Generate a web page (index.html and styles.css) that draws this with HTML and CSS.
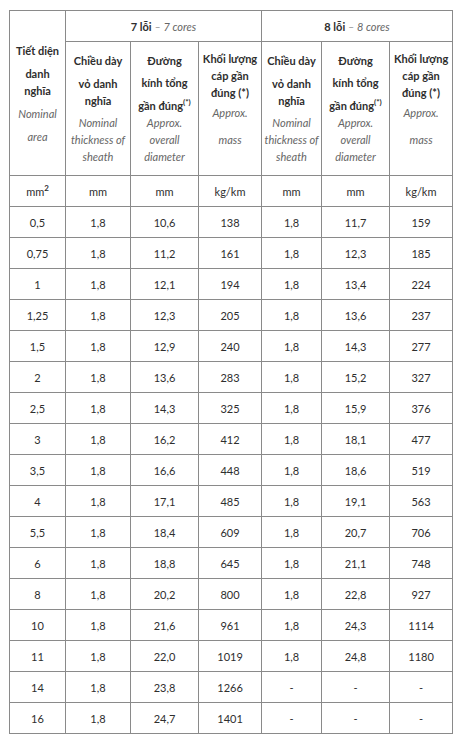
FILE: index.html
```html
<!DOCTYPE html>
<html lang="vi">
<head>
<meta charset="utf-8">
<link rel="stylesheet" href="styles.css">
</head>
<body>
<table class="spec">
  <colgroup>
    <col class="c1"><col class="c2"><col class="c3"><col class="c4"><col class="c5"><col class="c6"><col class="c7">
  </colgroup>
  <thead>
    <tr class="group">
      <th rowspan="2" class="h-area">
        <span class="ln">Tiết diện</span>
        <span class="ln gap">danh</span>
        <span class="ln">nghĩa</span>
        <span class="ln gap it">Nominal</span>
        <span class="ln gap it">area</span>
      </th>
      <th colspan="3" class="grp"><b>7 lỗi</b> <span class="it">– 7 cores</span></th>
      <th colspan="3" class="grp"><b>8 lỗi</b> <span class="it">– 8 cores</span></th>
    </tr>
    <tr class="sub">
      <th>
        <span class="ln">Chiều dày</span>
        <span class="ln gap">vỏ danh</span>
        <span class="ln">nghĩa</span>
        <span class="ln gap5 it">Nominal</span>
        <span class="ln it">thickness of</span>
        <span class="ln it">sheath</span>
      </th>
      <th>
        <span class="ln">Đường</span>
        <span class="ln gap5">kính tổng</span>
        <span class="ln gap">gần đúng<sup>(*)</sup></span>
        <span class="ln it">Approx.</span>
        <span class="ln it">overall</span>
        <span class="ln it">diameter</span>
      </th>
      <th class="h-mass">
        <span class="ln">Khối lượng</span>
        <span class="ln">cáp gần</span>
        <span class="ln">đúng (*)</span>
        <span class="ln gap3 it">Approx.</span>
        <span class="ln gap10 it">mass</span>
      </th>
      <th>
        <span class="ln">Chiều dày</span>
        <span class="ln gap">vỏ danh</span>
        <span class="ln">nghĩa</span>
        <span class="ln gap5 it">Nominal</span>
        <span class="ln it">thickness of</span>
        <span class="ln it">sheath</span>
      </th>
      <th>
        <span class="ln">Đường</span>
        <span class="ln gap5">kính tổng</span>
        <span class="ln gap">gần đúng<sup>(*)</sup></span>
        <span class="ln it">Approx.</span>
        <span class="ln it">overall</span>
        <span class="ln it">diameter</span>
      </th>
      <th class="h-mass">
        <span class="ln">Khối lượng</span>
        <span class="ln">cáp gần</span>
        <span class="ln">đúng (*)</span>
        <span class="ln gap3 it">Approx.</span>
        <span class="ln gap10 it">mass</span>
      </th>
    </tr>
  </thead>
  <tbody>
    <tr><td>mm<sup>2</sup></td><td>mm</td><td>mm</td><td>kg/km</td><td>mm</td><td>mm</td><td>kg/km</td></tr>
    <tr><td>0,5</td><td>1,8</td><td>10,6</td><td>138</td><td>1,8</td><td>11,7</td><td>159</td></tr>
    <tr><td>0,75</td><td>1,8</td><td>11,2</td><td>161</td><td>1,8</td><td>12,3</td><td>185</td></tr>
    <tr><td>1</td><td>1,8</td><td>12,1</td><td>194</td><td>1,8</td><td>13,4</td><td>224</td></tr>
    <tr><td>1,25</td><td>1,8</td><td>12,3</td><td>205</td><td>1,8</td><td>13,6</td><td>237</td></tr>
    <tr><td>1,5</td><td>1,8</td><td>12,9</td><td>240</td><td>1,8</td><td>14,3</td><td>277</td></tr>
    <tr><td>2</td><td>1,8</td><td>13,6</td><td>283</td><td>1,8</td><td>15,2</td><td>327</td></tr>
    <tr><td>2,5</td><td>1,8</td><td>14,3</td><td>325</td><td>1,8</td><td>15,9</td><td>376</td></tr>
    <tr><td>3</td><td>1,8</td><td>16,2</td><td>412</td><td>1,8</td><td>18,1</td><td>477</td></tr>
    <tr><td>3,5</td><td>1,8</td><td>16,6</td><td>448</td><td>1,8</td><td>18,6</td><td>519</td></tr>
    <tr><td>4</td><td>1,8</td><td>17,1</td><td>485</td><td>1,8</td><td>19,1</td><td>563</td></tr>
    <tr><td>5,5</td><td>1,8</td><td>18,4</td><td>609</td><td>1,8</td><td>20,7</td><td>706</td></tr>
    <tr><td>6</td><td>1,8</td><td>18,8</td><td>645</td><td>1,8</td><td>21,1</td><td>748</td></tr>
    <tr><td>8</td><td>1,8</td><td>20,2</td><td>800</td><td>1,8</td><td>22,8</td><td>927</td></tr>
    <tr><td>10</td><td>1,8</td><td>21,6</td><td>961</td><td>1,8</td><td>24,3</td><td>1114</td></tr>
    <tr><td>11</td><td>1,8</td><td>22,0</td><td>1019</td><td>1,8</td><td>24,8</td><td>1180</td></tr>
    <tr><td>14</td><td>1,8</td><td>23,8</td><td>1266</td><td>-</td><td>-</td><td>-</td></tr>
    <tr><td>16</td><td>1,8</td><td>24,7</td><td>1401</td><td>-</td><td>-</td><td>-</td></tr>
  </tbody>
</table>
</body>
</html>
```

FILE: styles.css
```css
html, body {
  margin: 0;
  padding: 0;
  background: #ffffff;
}

body {
  padding: 10px 0 0 9px;
  font-family: Lato, "Open Sans", "Liberation Sans", sans-serif;
  font-size: 11px;
  color: #2e2e2e;
}

.spec {
  border-collapse: collapse;
  table-layout: fixed;
  width: 443px;
}

.c1 { width: 56px; }
.c2 { width: 65px; }
.c3 { width: 68px; }
.c4 { width: 63px; }
.c5 { width: 60px; }
.c6 { width: 68px; }
.c7 { width: 63px; }

.spec th,
.spec td {
  border: 1px solid #8a8a8a;
  padding: 0 2px;
  text-align: center;
  vertical-align: middle;
}

.spec td {
  height: 30px;
  font-weight: normal;
}

.group th.grp {
  height: 30px;
  font-weight: normal;
}

.group b {
  font-weight: bold;
}

.sub th {
  height: 133px;
}

.ln {
  display: block;
  line-height: 17px;
  white-space: nowrap;
}

.gap { margin-top: 6px; }
.gap5 { margin-top: 5px; }
.gap3 { margin-top: 3px; }
.gap10 { margin-top: 10px; }

.h-mass .gap10 { margin-bottom: 20px; }

.it {
  font-style: italic;
  font-weight: normal;
  color: #666666;
}

sup {
  font-size: 8px;
  font-weight: bold;
  line-height: 0;
  vertical-align: 5px;
}
```
